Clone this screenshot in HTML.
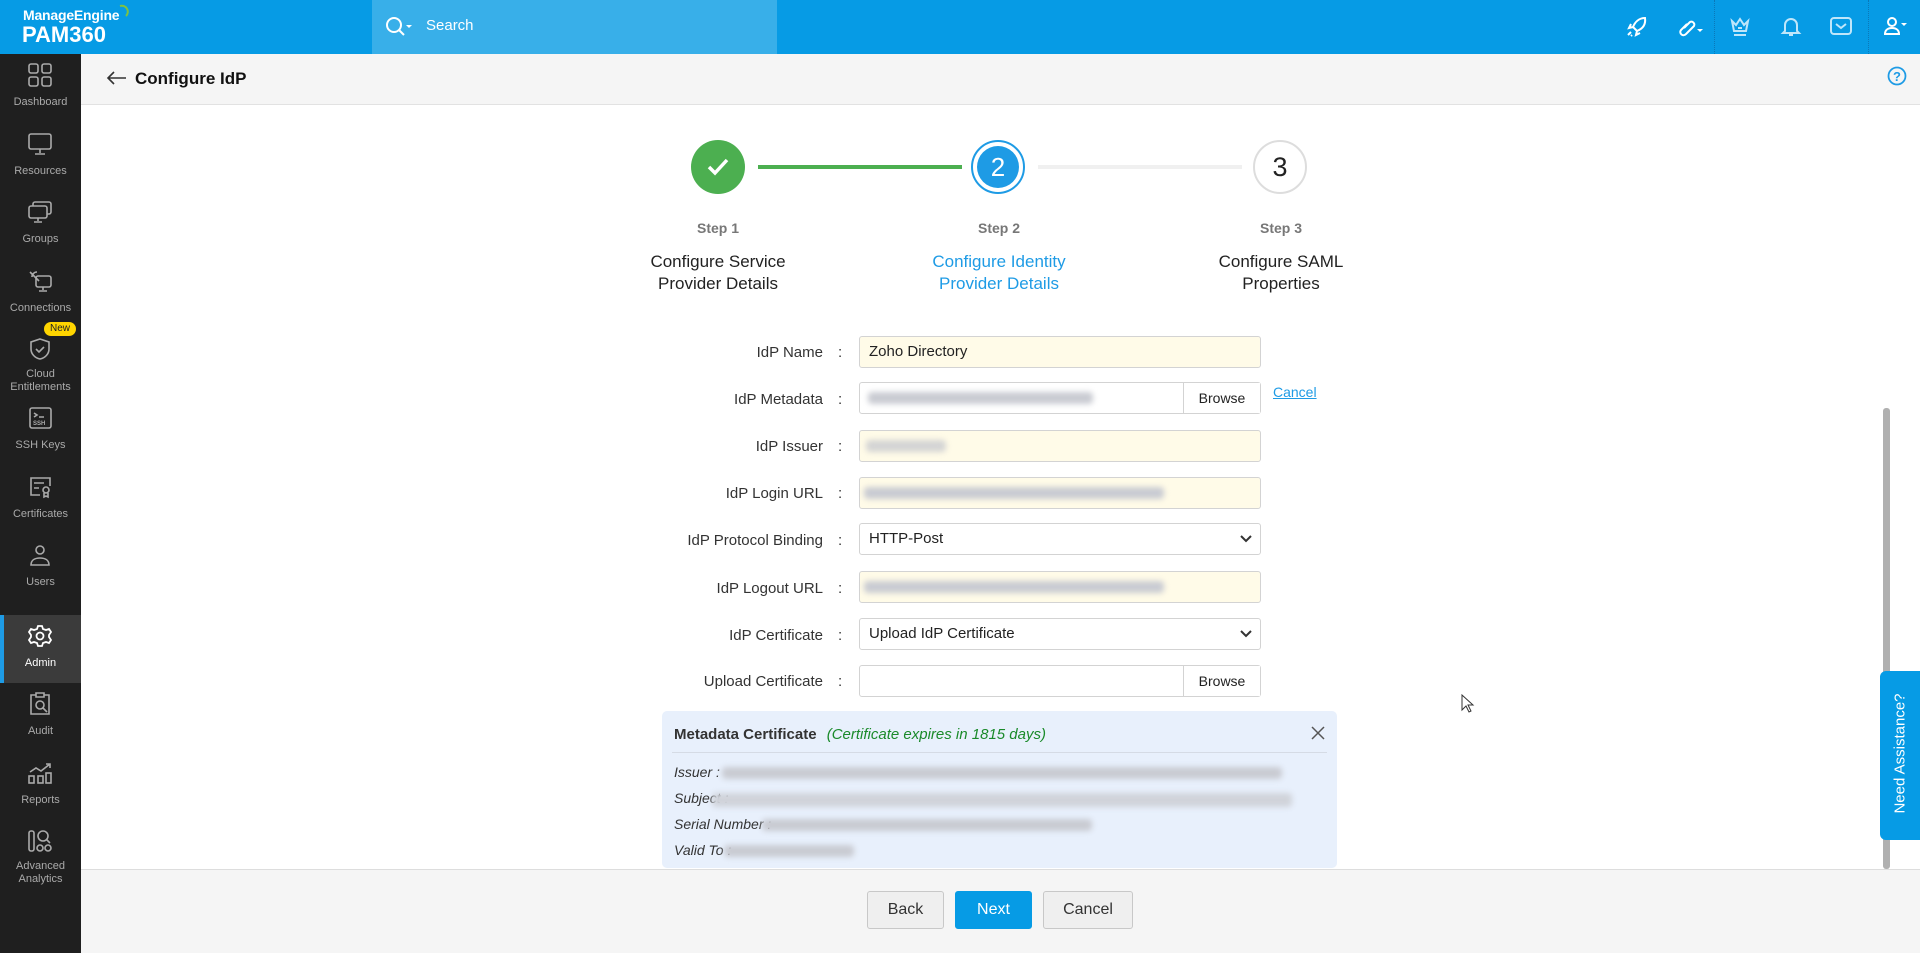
<!DOCTYPE html>
<html><head><meta charset="utf-8">
<style>
*{box-sizing:border-box;margin:0;padding:0}
body{width:1920px;height:953px;overflow:hidden;font-family:"Liberation Sans",sans-serif;background:#fff;position:relative;color:#222}
.hdr{position:absolute;left:0;top:0;width:1920px;height:54px;background:#069be5}
.logo1{position:absolute;left:23px;top:7px;color:#fff;font-size:14px;font-weight:bold;letter-spacing:-.2px}
.logo2{position:absolute;left:22px;top:22px;color:#fff;font-size:22px;font-weight:bold}
.search{position:absolute;left:372px;top:0;width:405px;height:54px;background:#38afe9}
.search span{position:absolute;left:54px;top:17px;color:#fff;font-size:15px}
.side{position:absolute;left:0;top:54px;width:81px;height:899px;background:#1f1f1f}
.item{position:absolute;left:0;width:81px;height:68px;color:#aaa;font-size:11px;text-align:center;line-height:13px}
.item svg{position:absolute;left:28px;top:9px}
.item .l{position:absolute;left:0;width:81px;top:42px}
.act{background:#3b3b3b;color:#fff;border-left:4px solid #1e9be5}
.tbar{position:absolute;left:81px;top:54px;width:1839px;height:51px;background:#f5f5f5;border-bottom:1px solid #e2e2e2}
.tbar .t{position:absolute;left:54px;top:15px;font-size:17px;font-weight:bold;color:#111}
.circ{position:absolute;width:54px;height:54px;border-radius:50%;top:140px;text-align:center}
.sl{position:absolute;width:240px;text-align:center;font-size:14px;font-weight:bold;color:#777;top:220px}
.st{position:absolute;width:240px;text-align:center;font-size:17px;line-height:22px;top:251px;color:#222}
.lab{position:absolute;left:560px;width:263px;text-align:right;font-size:15px;color:#333}
.col{position:absolute;left:838px;font-size:15px;color:#333}
.inp{position:absolute;left:859px;width:402px;height:32px;border:1px solid #d3d3d3;border-radius:3px;background:#fffbe8;font-size:15px;padding:6px 9px;color:#222}
.wh{background:#fff}
.br{position:absolute;right:0;top:0;width:77px;height:30px;border-left:1px solid #d3d3d3;text-align:center;line-height:30px;font-size:14px;background:#fff}
.blur{position:absolute;background:#c9cbd2;filter:blur(3px);height:12px;border-radius:4px}
.meta{position:absolute;left:662px;top:711px;width:675px;height:157px;background:#e8f0fc;border-radius:5px}
.foot{position:absolute;left:81px;top:869px;width:1839px;height:84px;background:#f5f5f5;border-top:1px solid #ddd}
.btn{position:absolute;top:891px;height:38px;border:1px solid #c8c8c8;border-radius:3px;background:#efefef;font-size:16px;text-align:center;line-height:36px;color:#333}
</style></head><body>
<div class="hdr">
<div class="logo1">ManageEngine</div>
<svg style="position:absolute;left:118px;top:4px" width="12" height="14"><path d="M2 2 A6 6 0 0 1 8 12" stroke="#7dc242" stroke-width="2" fill="none"/></svg>
<div class="logo2">PAM360</div>
<div class="search"><svg style="position:absolute;left:12px;top:15px" width="30" height="24"><circle cx="10" cy="10" r="7" stroke="#fff" stroke-width="2" fill="none"/><path d="M15 15l5 5" stroke="#fff" stroke-width="2"/><path d="M22 10l3 3 3-3z" fill="#fff"/></svg><span>Search</span></div>
<svg style="position:absolute;left:1625px;top:15px" width="24" height="24" fill="none" stroke="#fff" stroke-width="2"><path d="M20 3c-6 0-10 4-12 9l4 4c5-2 9-6 8-13zM8 12l-4 1 2-4M12 16l-1 4 4-2M6 17l-3 3M7 20l-1 1"/></svg>
<svg style="position:absolute;left:1675px;top:15px" width="30" height="24" fill="none" stroke="#fff" stroke-width="2"><path d="M9 13l6-6a3 3 0 0 1 4 4l-8 8a3 3 0 0 1-5-4l6-6"/><path d="M22 14l3 3 3-3z" fill="#fff" stroke="none"/></svg>
<div style="position:absolute;left:1714px;top:0;width:1px;height:54px;border-left:1px dotted #0a78b8"></div>
<svg style="position:absolute;left:1728px;top:14px" width="24" height="24" fill="none" stroke="#bfe6fa" stroke-width="2"><path d="M4 7l4 4 4-6 4 6 4-4-2 10H6zM6 21h12M10 14h4"/></svg>
<svg style="position:absolute;left:1779px;top:14px" width="24" height="24" fill="none" stroke="#bfe6fa" stroke-width="2"><path d="M6 17V11a6 6 0 0 1 12 0v6l2 2H4zM10 21h4"/></svg>
<svg style="position:absolute;left:1829px;top:15px" width="24" height="22" fill="none" stroke="#bfe6fa" stroke-width="2"><rect x="2" y="3" width="20" height="16" rx="3"/><path d="M7 9l5 4 5-4"/></svg>
<div style="position:absolute;left:1868px;top:0;width:1px;height:54px;border-left:1px dotted #0a78b8"></div>
<svg style="position:absolute;left:1882px;top:14px" width="30" height="24" fill="none" stroke="#fff" stroke-width="2"><circle cx="10" cy="8" r="4"/><path d="M3 20c0-4 3-6 7-6s7 2 7 6z"/><path d="M19 9l3 3 3-3z" fill="#fff" stroke="none"/></svg>
</div>
<div class="side">
<div class="item" style="top:0"><svg width="25" height="25" fill="none" stroke="#aaa" stroke-width="1.6"><rect x="1" y="1" width="9" height="9" rx="2"/><rect x="14" y="1" width="9" height="9" rx="2"/><rect x="1" y="14" width="9" height="9" rx="2"/><rect x="14" y="14" width="9" height="9" rx="2"/></svg><div class="l">Dashboard</div></div>
<div class="item" style="top:69px"><svg width="25" height="25" fill="none" stroke="#aaa" stroke-width="1.6"><rect x="1" y="2" width="22" height="15" rx="2"/><path d="M12 17v4M7 22h10"/></svg><div class="l">Resources</div></div>
<div class="item" style="top:137px"><svg width="25" height="25" fill="none" stroke="#aaa" stroke-width="1.6"><rect x="5" y="2" width="18" height="12" rx="2"/><rect x="1" y="6" width="18" height="12" rx="2" fill="#1f1f1f"/><path d="M10 18v3M6 22h8"/></svg><div class="l">Groups</div></div>
<div class="item" style="top:206px"><svg width="25" height="25" fill="none" stroke="#aaa" stroke-width="1.6"><rect x="8" y="7" width="15" height="11" rx="2"/><path d="M15 18v3M11 22h8M2 3l9 9M4 8a5 5 0 0 1 5-5"/></svg><div class="l">Connections</div></div>
<div class="item" style="top:274px"><svg width="25" height="25" fill="none" stroke="#aaa" stroke-width="1.6"><path d="M12 2l9 3v7c0 5-4 9-9 10-5-1-9-5-9-10V5z"/><path d="M8 12l3 3 5-5"/></svg><div class="l" style="top:40px">Cloud<br>Entitlements</div><div style="position:absolute;left:44px;top:-6px;background:#ffd500;color:#222;border-radius:8px;font-size:10px;padding:1px 6px;line-height:12px">New</div></div>
<div class="item" style="top:343px"><svg width="25" height="25" fill="none" stroke="#aaa" stroke-width="1.6"><rect x="2" y="2" width="21" height="20" rx="2"/><path d="M6 7l3 2-3 2M11 11h5"/><text x="5" y="19" font-size="6" fill="#aaa" stroke="none" font-weight="bold">SSH</text></svg><div class="l">SSH Keys</div></div>
<div class="item" style="top:412px"><svg width="25" height="25" fill="none" stroke="#aaa" stroke-width="1.6"><path d="M12 20H3V3h19v8M6 8h10M6 13h5"/><circle cx="18" cy="15" r="3"/><path d="M16 18v4l2-1 2 1v-4"/></svg><div class="l">Certificates</div></div>
<div class="item" style="top:480px"><svg width="25" height="25" fill="none" stroke="#aaa" stroke-width="1.6"><circle cx="12" cy="7" r="4"/><path d="M3 22c0-5 4-7 9-7s9 2 9 7z"/></svg><div class="l">Users</div></div>
<div class="item act" style="top:561px;height:68px"><svg style="left:24px" width="25" height="25" fill="none" stroke="#fff" stroke-width="1.8"><path d="M10 2h4l1 3 3 1 3-1 2 3-2 3v2l2 3-2 3-3-1-3 1-1 3h-4l-1-3-3-1-3 1-2-3 2-3v-2L1 8l2-3 3 1 3-1z"/><circle cx="12" cy="12" r="3.5"/></svg><div class="l" style="left:-4px">Admin</div></div>
<div class="item" style="top:629px"><svg width="25" height="25" fill="none" stroke="#aaa" stroke-width="1.6"><path d="M8 3H3v19h18V3h-5M8 1h8v4H8z"/><circle cx="12" cy="13" r="4"/><path d="M15 16l4 4"/></svg><div class="l">Audit</div></div>
<div class="item" style="top:698px"><svg width="25" height="25" fill="none" stroke="#aaa" stroke-width="1.6"><rect x="1" y="15" width="5" height="7"/><rect x="10" y="15" width="5" height="7"/><rect x="18" y="12" width="5" height="10"/><path d="M2 11l6-4 5 3 9-7M18 3h4v4"/></svg><div class="l">Reports</div></div>
<div class="item" style="top:766px"><svg width="25" height="25" fill="none" stroke="#aaa" stroke-width="1.6"><rect x="1" y="2" width="5" height="20" rx="2"/><circle cx="15" cy="7" r="5"/><path d="M19 11l3 3"/><circle cx="12" cy="19" r="3"/><circle cx="20" cy="19" r="3"/></svg><div class="l" style="top:40px">Advanced<br>Analytics</div></div>
</div>
<div class="tbar">
<svg style="position:absolute;left:25px;top:16px" width="22" height="16" fill="none" stroke="#333" stroke-width="1.6"><path d="M20 8H2M8 2L2 8l6 6"/></svg>
<div class="t">Configure IdP</div>
<svg style="position:absolute;left:1806px;top:12px" width="20" height="20" fill="none" stroke="#1e9be5" stroke-width="1.8"><circle cx="10" cy="10" r="8.5"/><text x="6" y="15" font-size="13" font-weight="bold" fill="#1e9be5" stroke="none" font-family="Liberation Sans">?</text></svg>
</div>
<div style="position:absolute;left:758px;top:165px;width:204px;height:4px;background:#4caf50"></div>
<div style="position:absolute;left:1038px;top:165px;width:204px;height:4px;background:#f0f0f0"></div>
<div class="circ" style="left:691px;background:#4caf50"><svg style="margin-top:15px" width="24" height="24" fill="none" stroke="#fff" stroke-width="3.5"><path d="M3 12l6 6L21 5"/></svg></div>
<div class="circ" style="left:971px;border:2px solid #1e9be5;padding:4px"><div style="width:42px;height:42px;border-radius:50%;background:#1e9be5;color:#fff;font-size:26px;line-height:42px">2</div></div>
<div class="circ" style="left:1253px;border:2px solid #ddd;font-size:27px;line-height:50px;color:#222">3</div>
<div class="sl" style="left:598px">Step 1</div><div class="sl" style="left:879px">Step 2</div><div class="sl" style="left:1161px">Step 3</div>
<div class="st" style="left:598px">Configure Service<br>Provider Details</div>
<div class="st" style="left:879px;color:#1e9be5">Configure Identity<br>Provider Details</div>
<div class="st" style="left:1161px">Configure SAML<br>Properties</div>

<div class="lab" style="top:344px">IdP Name</div><div class="col" style="top:344px">:</div>
<div class="inp" style="top:336px">Zoho Directory</div>
<div class="lab" style="top:391px">IdP Metadata</div><div class="col" style="top:391px">:</div>
<div class="inp wh" style="top:382px"><div class="blur" style="left:8px;top:9px;width:225px"></div><div class="br">Browse</div></div>
<div style="position:absolute;left:1273px;top:384px;color:#1e9be5;text-decoration:underline;font-size:14px">Cancel</div>
<div class="lab" style="top:438px">IdP Issuer</div><div class="col" style="top:438px">:</div>
<div class="inp" style="top:430px"><div class="blur" style="left:6px;top:9px;width:80px;background:#d4d4d4"></div></div>
<div class="lab" style="top:485px">IdP Login URL</div><div class="col" style="top:485px">:</div>
<div class="inp" style="top:477px"><div class="blur" style="left:4px;top:9px;width:300px"></div></div>
<div class="lab" style="top:532px">IdP Protocol Binding</div><div class="col" style="top:532px">:</div>
<div class="inp wh" style="top:523px">HTTP-Post<svg style="position:absolute;right:8px;top:11px" width="12" height="8" fill="none" stroke="#333" stroke-width="2"><path d="M1 1l5 5 5-5"/></svg></div>
<div class="lab" style="top:580px">IdP Logout URL</div><div class="col" style="top:580px">:</div>
<div class="inp" style="top:571px"><div class="blur" style="left:4px;top:9px;width:300px"></div></div>
<div class="lab" style="top:627px">IdP Certificate</div><div class="col" style="top:627px">:</div>
<div class="inp wh" style="top:618px">Upload IdP Certificate<svg style="position:absolute;right:8px;top:11px" width="12" height="8" fill="none" stroke="#333" stroke-width="2"><path d="M1 1l5 5 5-5"/></svg></div>
<div class="lab" style="top:673px">Upload Certificate</div><div class="col" style="top:673px">:</div>
<div class="inp wh" style="top:665px"><div class="br">Browse</div></div>

<div class="meta">
<div style="position:absolute;left:12px;top:15px;font-size:15px;font-weight:bold;color:#333">Metadata Certificate <i style="font-weight:normal;color:#1a8a2a;margin-left:6px">(Certificate expires in 1815 days)</i></div>
<svg style="position:absolute;right:12px;top:15px" width="14" height="14" stroke="#555" stroke-width="1.5"><path d="M1 1l12 12M13 1L1 13"/></svg>
<div style="position:absolute;left:10px;right:10px;top:41px;border-top:1px solid #d5dbe5"></div>
<div style="position:absolute;left:12px;top:48px;font-size:14px;font-style:italic;color:#333;line-height:26px">Issuer :<br>Subject :<br>Serial Number :<br>Valid To :</div>
<div class="blur" style="left:60px;top:56px;width:560px"></div>
<div class="blur" style="left:50px;top:82px;width:580px;height:14px;background:#d0d3da"></div>
<div class="blur" style="left:100px;top:108px;width:330px"></div>
<div class="blur" style="left:62px;top:134px;width:130px"></div>
</div>
<div style="position:absolute;left:1883px;top:408px;width:7px;height:461px;background:#b0b0b0;border-radius:3px"></div>
<div style="position:absolute;left:1880px;top:671px;width:40px;height:169px;background:#069be5;border-radius:6px 0 0 6px"><div style="position:absolute;left:-46px;top:74px;width:132px;transform:rotate(-90deg);color:#fff;font-size:15px;text-align:center">Need Assistance?</div></div>
<div class="foot"></div>
<div class="btn" style="left:867px;width:77px">Back</div>
<div class="btn" style="left:955px;width:77px;background:#069be5;border-color:#069be5;color:#fff">Next</div>
<div class="btn" style="left:1043px;width:90px">Cancel</div>
<svg style="position:absolute;left:1461px;top:694px" width="14" height="20"><path d="M1 1v15l4-4 3 6 2-1-3-6h5z" fill="#fff" stroke="#333"/></svg>
</body></html>
